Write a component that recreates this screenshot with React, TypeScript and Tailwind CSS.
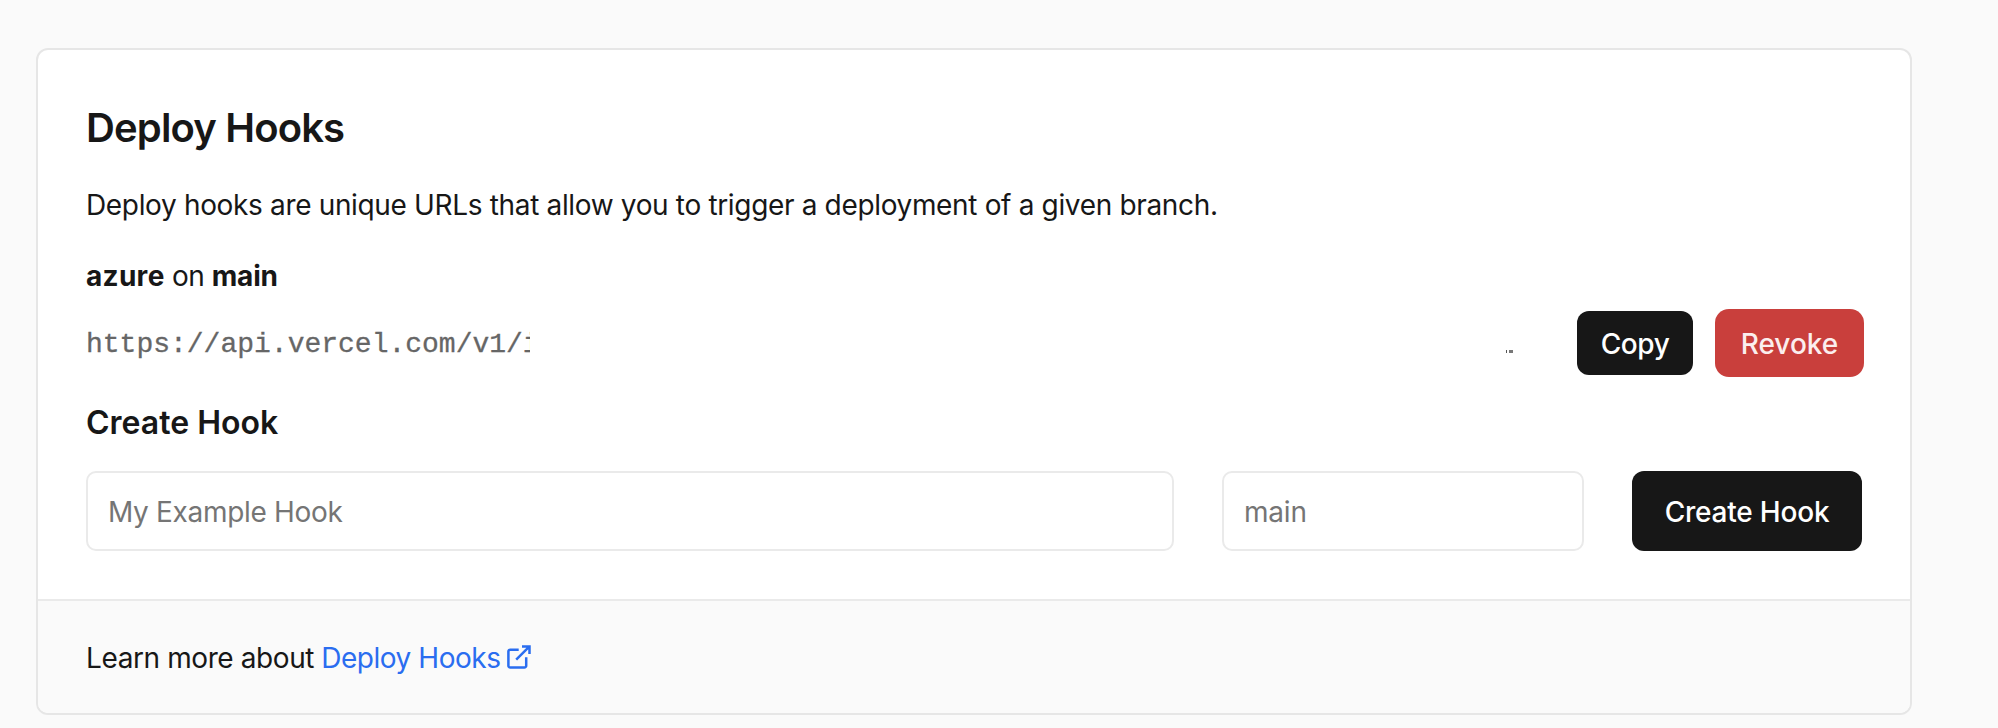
const sans = "font-['Inter','Liberation_Sans',sans-serif]";

function ExternalIcon() {
  return (
    <svg
      width="28"
      height="28"
      viewBox="0 0 28 28"
      fill="none"
      stroke="currentColor"
      strokeWidth="2.5"
      className="ml-1 shrink-0"
    >
      <path d="M13.7 6.7H5.2a1.8 1.8 0 0 0-1.8 1.8V22.7a1.8 1.8 0 0 0 1.8 1.8H19.4a1.8 1.8 0 0 0 1.8-1.8V14.3" />
      <path d="M17 3.4H24.5V11M24.5 3.4L11.2 16.7" />
    </svg>
  );
}

export default function App() {
  return (
    <div className={`${sans} min-h-[728px] bg-[#fafafa] pt-12 pr-[86px] pb-[13px] pl-9 text-[28px] leading-[42px] text-[#171717]`}>
      <section className="flex h-[667px] flex-col overflow-hidden rounded-[12px] border-2 border-[#e6e6e6] bg-white">
        <div className="flex h-[549px] flex-col px-12 pt-12">
          <h2 className="text-[40px] leading-[60px] font-semibold tracking-[-0.86px] whitespace-nowrap">Deploy Hooks</h2>
          <p className="mt-[26px] tracking-[-0.34px] whitespace-nowrap">
            Deploy hooks are unique URLs that allow you to trigger a deployment of a given branch.
          </p>
          <p className="mt-[29px] whitespace-nowrap">
            <b className="font-bold tracking-[0.3px]">azure</b>
            <span className="tracking-[-0.5px]"> on </span>
            <b className="font-bold tracking-[-0.2px]">main</b>
          </p>
          <div className="-mr-[2px] mt-[12px] flex h-[68px] items-center">
            <code className="w-[444px] shrink-0 overflow-hidden pt-[3px] font-['Liberation_Mono',monospace] whitespace-nowrap text-[#666666] [-webkit-text-stroke:0.3px_#666666]">
              https://api.vercel.com/v1/i
            </code>
            <span className="mt-[17px] ml-auto flex h-[3px] w-[7px] gap-[2px]">
              <span className="w-px bg-[#555555]" />
              <span className="w-1 bg-[#777777]" />
            </span>
            <button className="ml-[64px] h-16 w-[116px] rounded-[12px] bg-[#171717] pt-px font-medium tracking-[-0.4px] text-white">Copy</button>
            <button className="ml-[22px] h-[68px] w-[149px] rounded-[14px] bg-[#c93f3c] pt-px font-medium text-[#fbeeee]">Revoke</button>
          </div>
          <h3 className="mt-[22px] text-[32px] leading-[48px] font-semibold whitespace-nowrap">Create Hook</h3>
          <form className="mt-[24px] flex gap-12">
            <input
              placeholder="My Example Hook"
              className="h-20 w-[1088px] rounded-[10px] border-2 border-[#eaeaea] bg-white px-5 pt-[2px] tracking-[-0.32px] placeholder:text-[#757575]"
            />
            <input
              placeholder="main"
              className="h-20 w-[362px] rounded-[10px] border-2 border-[#eaeaea] bg-white px-5 pt-[2px] tracking-[-0.2px] placeholder:text-[#757575]"
            />
            <button type="button" className="h-20 w-[230px] rounded-[12px] bg-[#171717] pt-px font-medium tracking-[-0.2px] whitespace-nowrap text-white">
              Create Hook
            </button>
          </form>
        </div>
        <footer className="flex flex-1 items-center border-t-2 border-[#eaeaea] bg-[#fafafa] px-12 whitespace-nowrap">
          <span className="pt-px tracking-[-0.4px]">Learn more about</span>
          <a href="#" className="ml-[7px] flex items-center text-[#2a6df0]">
            <span className="pt-px tracking-[-0.45px]">Deploy Hooks</span>
            <ExternalIcon />
          </a>
        </footer>
      </section>
    </div>
  );
}
